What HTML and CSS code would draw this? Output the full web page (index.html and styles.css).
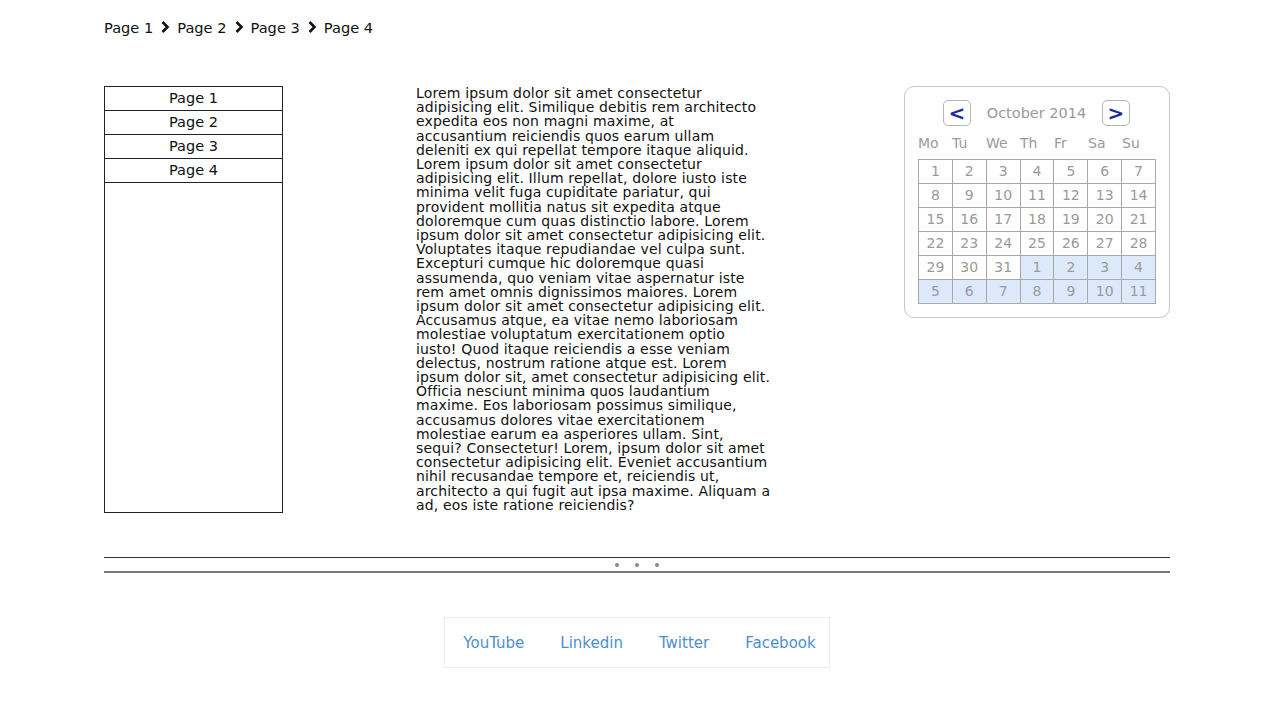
FILE: index.html
```html
<!DOCTYPE html>
<html lang="en">
<head>
<meta charset="utf-8">
<title>Pages</title>
<link rel="stylesheet" href="styles.css">
</head>
<body>
<div class="wrap">
  <nav class="crumbs">
    <span>Page 1</span>
    <svg class="chev" width="10" height="14" viewBox="0 0 10 14"><path d="M2.5 2 L7.5 7 L2.5 12" fill="none" stroke="#111" stroke-width="2.6" stroke-linejoin="miter"/></svg>
    <span>Page 2</span>
    <svg class="chev" width="10" height="14" viewBox="0 0 10 14"><path d="M2.5 2 L7.5 7 L2.5 12" fill="none" stroke="#111" stroke-width="2.6" stroke-linejoin="miter"/></svg>
    <span>Page 3</span>
    <svg class="chev" width="10" height="14" viewBox="0 0 10 14"><path d="M2.5 2 L7.5 7 L2.5 12" fill="none" stroke="#111" stroke-width="2.6" stroke-linejoin="miter"/></svg>
    <span>Page 4</span>
  </nav>

  <main class="main">
    <ul class="side">
      <li>Page 1</li>
      <li>Page 2</li>
      <li>Page 3</li>
      <li>Page 4</li>
    </ul>

    <p class="text">Lorem ipsum dolor sit amet consectetur<br>adipisicing elit. Similique debitis rem architecto<br>expedita eos non magni maxime, at<br>accusantium reiciendis quos earum ullam<br>deleniti ex qui repellat tempore itaque aliquid.<br>Lorem ipsum dolor sit amet consectetur<br>adipisicing elit. Illum repellat, dolore iusto iste<br>minima velit fuga cupiditate pariatur, qui<br>provident mollitia natus sit expedita atque<br>doloremque cum quas distinctio labore. Lorem<br>ipsum dolor sit amet consectetur adipisicing elit.<br>Voluptates itaque repudiandae vel culpa sunt.<br>Excepturi cumque hic doloremque quasi<br>assumenda, quo veniam vitae aspernatur iste<br>rem amet omnis dignissimos maiores. Lorem<br>ipsum dolor sit amet consectetur adipisicing elit.<br>Accusamus atque, ea vitae nemo laboriosam<br>molestiae voluptatum exercitationem optio<br>iusto! Quod itaque reiciendis a esse veniam<br>delectus, nostrum ratione atque est. Lorem<br>ipsum dolor sit, amet consectetur adipisicing elit.<br>Officia nesciunt minima quos laudantium<br>maxime. Eos laboriosam possimus similique,<br>accusamus dolores vitae exercitationem<br>molestiae earum ea asperiores ullam. Sint,<br>sequi? Consectetur! Lorem, ipsum dolor sit amet<br>consectetur adipisicing elit. Eveniet accusantium<br>nihil recusandae tempore et, reiciendis ut,<br>architecto a qui fugit aut ipsa maxime. Aliquam a<br>ad, eos iste ratione reiciendis?</p>

    <div class="cal">
      <div class="cal-head">
        <button class="nav">&lt;</button>
        <span class="month">October 2014</span>
        <button class="nav">&gt;</button>
      </div>
      <div class="dow">
        <span>Mo</span><span>Tu</span><span>We</span><span>Th</span><span>Fr</span><span>Sa</span><span>Su</span>
      </div>
      <div class="grid">
        <span>1</span><span>2</span><span>3</span><span>4</span><span>5</span><span>6</span><span>7</span>
        <span>8</span><span>9</span><span>10</span><span>11</span><span>12</span><span>13</span><span>14</span>
        <span>15</span><span>16</span><span>17</span><span>18</span><span>19</span><span>20</span><span>21</span>
        <span>22</span><span>23</span><span>24</span><span>25</span><span>26</span><span>27</span><span>28</span>
        <span>29</span><span>30</span><span>31</span><span class="next">1</span><span class="next">2</span><span class="next">3</span><span class="next">4</span>
        <span class="next">5</span><span class="next">6</span><span class="next">7</span><span class="next">8</span><span class="next">9</span><span class="next">10</span><span class="next">11</span>
      </div>
    </div>
  </main>

  <div class="divider">
    <i></i><i></i><i></i>
  </div>

  <footer class="foot">
    <div class="links">
      <a href="#">YouTube</a>
      <a href="#">Linkedin</a>
      <a href="#">Twitter</a>
      <a href="#">Facebook</a>
    </div>
  </footer>
</div>
</body>
</html>
```

FILE: styles.css
```css
* { box-sizing: border-box; }
body {
  margin: 0;
  background: #fff;
  color: #111;
  font-family: "DejaVu Sans", "Open Sans", sans-serif;
}
.wrap {
  width: 1066px;
  margin-left: 104px;
}
.crumbs {
  display: flex;
  align-items: center;
  height: 16px;
  margin-top: 19px;
  font-size: 14.6px;
  color: #111;
}
.crumbs .chev {
  margin: 0 7px 0 7px;
}
.main {
  display: flex;
  align-items: flex-start;
  margin-top: 51px;
}
.side {
  list-style: none;
  margin: 0;
  padding: 0;
  width: 179px;
  height: 427px;
  border: 1px solid #222;
  flex: none;
}
.side li {
  height: 24px;
  line-height: 23px;
  border-bottom: 1px solid #222;
  text-align: center;
  font-size: 14.5px;
}
.text {
  margin: 0 0 0 133px;
  width: 360px;
  font-size: 14px;
  letter-spacing: 0.15px;
  line-height: 14.2px;
  white-space: nowrap;
  color: #111;
}
.cal {
  margin-left: auto;
  width: 266px;
  border: 1px solid #c8c8c8;
  border-radius: 10px;
  padding: 13px 14px 13px 13px;
  flex: none;
}
.cal-head {
  display: flex;
  align-items: center;
  justify-content: space-between;
  padding: 0 25px;
  height: 26px;
}
.nav {
  width: 28px;
  height: 26px;
  padding: 0;
  border: 1px solid #b5b5b5;
  border-radius: 5px;
  background: #fff;
  color: #1c2c9c;
  font-family: "DejaVu Sans", sans-serif;
  font-weight: bold;
  font-size: 20px;
  line-height: 22px;
}
.month {
  color: #9a9a9a;
  font-size: 14.5px;
}
.dow {
  display: grid;
  grid-template-columns: repeat(7, 1fr);
  width: 238px;
  margin-top: 7px;
  height: 20px;
  line-height: 20px;
  font-size: 14px;
  color: #9a9a9a;
}
.grid {
  display: grid;
  grid-template-columns: repeat(7, 1fr);
  grid-auto-rows: 24px;
  margin-top: 6px;
  width: 238px;
  border-top: 1px solid #a8a8a8;
  border-left: 1px solid #a8a8a8;
}
.grid span {
  border-right: 1px solid #a8a8a8;
  border-bottom: 1px solid #a8a8a8;
  text-align: center;
  line-height: 23px;
  font-size: 14px;
  color: #9a9a9a;
}
.grid .next {
  background: #dce9fa;
}
.divider {
  margin-top: 44px;
  height: 16px;
  border-top: 1px solid #333;
  border-bottom: 2px solid #777;
  display: flex;
  justify-content: center;
  align-items: center;
  gap: 16px;
}
.divider i {
  width: 4px;
  height: 4px;
  border-radius: 50%;
  background: #888;
}
.foot {
  display: flex;
  justify-content: center;
  margin-top: 44px;
}
.links {
  display: flex;
  height: 51px;
  align-items: center;
  border: 1px solid #ececec;
}
.links a {
  padding: 0 18px;
  font-size: 15px;
  color: #4b8fcf;
  text-decoration: none;
}
.links a:last-child {
  padding-right: 13px;
}
```
